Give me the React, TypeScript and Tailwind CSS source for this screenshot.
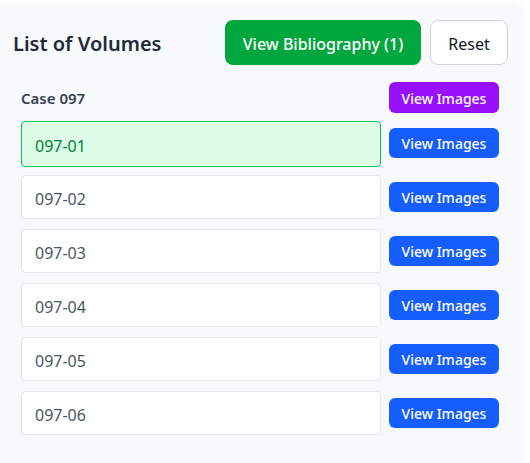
import React from 'react'

const volumes = ['097-01', '097-02', '097-03', '097-04', '097-05', '097-06']

export default function App() {
  const selected = '097-01'

  return (
    <div className="min-h-[463px] bg-white pt-[3px] font-['Noto_Sans',sans-serif]">
      <div className="h-[460px] w-[525px] rounded-tr-xl bg-[#f8f9fb]">
        {/* Header */}
        <div className="flex items-center pl-[13px] pr-[17px] pt-[17px]">
          <h2 className="flex-1 pt-[2px] text-[20px] font-semibold text-[#1e2939]">List of Volumes</h2>
          <button className="h-[45px] w-[196px] rounded-lg bg-[#00a63e] pt-[2px] text-[16px] font-medium text-white">
            View Bibliography (1)
          </button>
          <button className="ml-[9px] h-[45px] w-[78px] rounded-lg border border-gray-300 bg-white pt-[2px] text-[16px] text-[#101828]">
            Reset
          </button>
        </div>

        {/* Case */}
        <div className="pl-[21px] pr-[26px]">
          <div className="mt-[17px] flex items-center justify-between">
            <span className="pt-[1px] text-[15px] font-semibold text-[#364153]">Case 097</span>
            <button className="h-[31px] w-[110px] rounded-md bg-[#9810fa] pt-[1px] text-[14px] font-medium text-white">
              View Images
            </button>
          </div>

          <div className="mt-[8px] flex flex-col gap-[10px]">
            {volumes.map((v) => {
              const active = v === selected
              return (
                <div key={v} className="flex h-[44px] items-start gap-[8px]">
                  <div
                    className={
                      active
                        ? 'flex h-[46px] w-[360px] shrink-0 items-center rounded-[4px] border border-[#00c950] bg-[#dcfce7] pl-[13px] pt-[3px] text-[16px] text-[#008236]'
                        : 'flex h-[44px] w-[360px] shrink-0 items-center rounded-[4px] border border-gray-200 bg-white pl-[13px] pt-[3px] text-[16px] text-[#4a5565]'
                    }
                  >
                    {v}
                  </div>
                  <button className="mt-[7px] h-[30px] w-[110px] rounded-md bg-[#155dfc] pt-[1px] text-[14px] font-medium text-white">
                    View Images
                  </button>
                </div>
              )
            })}
          </div>
        </div>
      </div>
    </div>
  )
}
